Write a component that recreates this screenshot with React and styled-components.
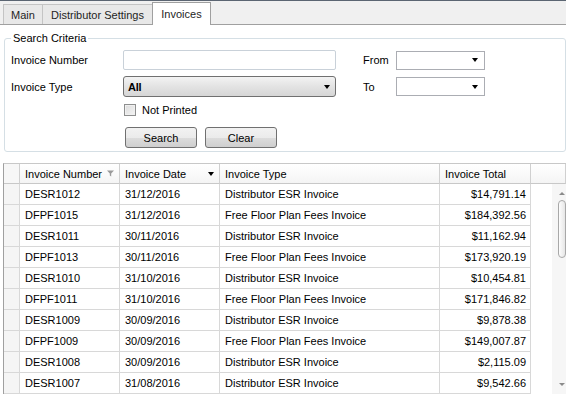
import React from "react"
import styled, { createGlobalStyle } from "styled-components"

const GlobalStyle = createGlobalStyle`
  body {
    margin: 0;
    background: #ffffff;
    font-family: "Liberation Sans", Arial, sans-serif;
    font-size: 11px;
    color: #000000;
  }
`

const rows = [
  ["DESR1012", "31/12/2016", "Distributor ESR Invoice", "$14,791.14"],
  ["DFPF1015", "31/12/2016", "Free Floor Plan Fees Invoice", "$184,392.56"],
  ["DESR1011", "30/11/2016", "Distributor ESR Invoice", "$11,162.94"],
  ["DFPF1013", "30/11/2016", "Free Floor Plan Fees Invoice", "$173,920.19"],
  ["DESR1010", "31/10/2016", "Distributor ESR Invoice", "$10,454.81"],
  ["DFPF1011", "31/10/2016", "Free Floor Plan Fees Invoice", "$171,846.82"],
  ["DESR1009", "30/09/2016", "Distributor ESR Invoice", "$9,878.38"],
  ["DFPF1009", "30/09/2016", "Free Floor Plan Fees Invoice", "$149,007.87"],
  ["DESR1008", "30/09/2016", "Distributor ESR Invoice", "$2,115.09"],
  ["DESR1007", "31/08/2016", "Distributor ESR Invoice", "$9,542.66"],
]

const COLS = "16px 100px 100px 220px 91px"

const Window = styled.div`
  width: 566px;
  height: 394px;
  overflow: hidden;
  border-top: 1px solid #5b6572;
  box-sizing: border-box;
  background: #ffffff;
`

const TabStrip = styled.div`
  display: flex;
  align-items: flex-end;
  height: 23px;
  padding-left: 3px;
  background: #f0f0f0;
  border-bottom: 1px solid #a0a0a0;
`

const Tab = styled.div`
  box-sizing: border-box;
  width: ${(p) => p.$w}px;
  height: ${(p) => (p.$active ? 23 : 20)}px;
  margin-bottom: ${(p) => (p.$active ? -1 : 0)}px;
  margin-right: -1px;
  padding-top: ${(p) => (p.$active ? 5 : 4)}px;
  text-align: center;
  color: #1e1e1e;
  background: ${(p) => (p.$active ? "#ffffff" : "#e8e8e8")};
  border: 1px solid ${(p) => (p.$active ? "#a0a0a0" : "#c4c4c4")};
  border-bottom: none;
  position: relative;
  z-index: ${(p) => (p.$active ? 1 : 0)};
`

const Content = styled.div`
  padding: 7px 0 0 0;
`

const GroupBox = styled.fieldset`
  margin: 0 0 0 4px;
  padding: 3px 0 0 6px;
  height: 120px;
  box-sizing: border-box;
  border: 1px solid #d5dfe5;
  border-radius: 3px;
`

const Legend = styled.legend`
  padding: 0 2px;
  margin-left: 0;
  color: #000000;
`

const Form = styled.div`
  display: grid;
  grid-template-columns: 112px 240px 33px 89px;
  grid-template-rows: 20px 21px 14px 25px;
  row-gap: 6px;
  align-items: center;
  margin-top: 3px;
`

const Label = styled.div`
  line-height: 14px;
`

const TextInput = styled.div`
  box-sizing: border-box;
  width: 213px;
  height: 20px;
  border: 1px solid #c9d1d9;
  border-radius: 2px;
  background: #ffffff;
`

const Select = styled.div`
  box-sizing: border-box;
  width: 213px;
  height: 21px;
  border: 1px solid #707070;
  border-radius: 3px;
  background: linear-gradient(#f3f3f3, #e3e3e3 50%, #d6d6d6);
  display: flex;
  align-items: center;
  justify-content: space-between;
  padding: 0 5px 0 4px;
  font-weight: bold;
  letter-spacing: -0.3px;
`

const DateBox = styled.div`
  box-sizing: border-box;
  width: 89px;
  height: 19px;
  border: 1px solid #abadb3;
  background: #ffffff;
  display: flex;
  align-items: center;
  justify-content: flex-end;
  padding-right: 6px;
`

const Arrow = styled.span`
  width: 0;
  height: 0;
  border-left: 3.5px solid transparent;
  border-right: 3.5px solid transparent;
  border-top: 4px solid #000000;
`

const CheckRow = styled.div`
  grid-column: 2;
  display: flex;
  align-items: center;
  gap: 6px;
  padding-left: 1px;
`

const CheckBox = styled.span`
  box-sizing: border-box;
  width: 12px;
  height: 12px;
  border: 1px solid #8e8f8f;
  background: linear-gradient(135deg, #dcdcdc, #f4f4f4);
  box-shadow: inset 0 0 0 1px #f0f0f0;
`

const ButtonRow = styled.div`
  grid-column: 2;
  align-self: end;
  display: flex;
  gap: 8px;
  padding-left: 2px;
`

const Button = styled.div`
  box-sizing: border-box;
  width: 72px;
  height: 21px;
  border: 1px solid #707070;
  border-radius: 3px;
  background: linear-gradient(#f2f2f2, #ebebeb 50%, #dddddd 51%, #cfcfcf);
  display: flex;
  align-items: center;
  justify-content: center;
`

const Grid = styled.div`
  margin: 11px 0 0 3px;
  border-left: 1px solid #a0a0a0;
  border-top: 1px solid #c8c8c8;
  display: flex;
  flex-direction: column;
`

const HeaderRow = styled.div`
  display: grid;
  grid-template-columns: ${COLS} 1fr;
  height: 20px;
  background: linear-gradient(#ffffff, #f4f4f4);
`

const HeaderCell = styled.div`
  box-sizing: border-box;
  border-right: 1px solid #d0d0d0;
  border-bottom: 1px solid #c8c8c8;
  padding: 0 5px;
  display: flex;
  align-items: center;
  justify-content: space-between;
  background: ${(p) => (p.$blank ? "#f7f7f7" : "transparent")};
`

const Body = styled.div`
  display: flex;
`

const RowList = styled.div`
  flex: 1;
`

const Row = styled.div`
  display: grid;
  grid-template-columns: ${COLS};
  height: 21px;
`

const Cell = styled.div`
  box-sizing: border-box;
  border-right: 1px solid #d8d8d8;
  border-bottom: 1px solid #d8d8d8;
  padding: 0 5px;
  display: flex;
  align-items: center;
  justify-content: ${(p) => (p.$right ? "flex-end" : "flex-start")};
  padding-right: ${(p) => (p.$right ? 4 : 5)}px;
  background: ${(p) => (p.$indicator ? "#f5f5f5" : "#ffffff")};
  white-space: nowrap;
`

const ScrollBar = styled.div`
  width: 14px;
  background: #f6f6f6;
  display: flex;
  flex-direction: column;
  align-items: flex-start;
  padding: 8px 0 0 6px;
  box-sizing: border-box;
`

const ScrollArrow = styled.span`
  width: 0;
  height: 0;
  margin-left: 1px;
  border-left: 3px solid transparent;
  border-right: 3px solid transparent;
  ${(p) =>
    p.$down
      ? "border-top: 3px solid #8a8a8a; margin-top: auto; margin-bottom: 8px;"
      : "border-bottom: 3px solid #8a8a8a;"}
`

const Thumb = styled.div`
  box-sizing: border-box;
  margin-top: 5px;
  width: 8px;
  height: 58px;
  border: 1px solid #a8a8a8;
  border-radius: 4px;
  background: linear-gradient(90deg, #fdfdfd, #e6e6e6);
`

function FilterIcon() {
  return (
    <svg width="7" height="7" viewBox="0 0 7 7">
      <path d="M0 0.5h7L4.2 3.5v3l-1.4-1v-2z" fill="#9a9a9a" />
    </svg>
  )
}

function App() {
  return (
    <Window>
      <GlobalStyle />
      <TabStrip>
        <Tab $w={40}>Main</Tab>
        <Tab $w={111}>Distributor Settings</Tab>
        <Tab $w={59} $active>
          Invoices
        </Tab>
      </TabStrip>

      <Content>
        <GroupBox>
          <Legend>Search Criteria</Legend>
          <Form>
            <Label>Invoice Number</Label>
            <TextInput />
            <Label>From</Label>
            <DateBox>
              <Arrow />
            </DateBox>

            <Label>Invoice Type</Label>
            <Select>
              <span>All</span>
              <Arrow />
            </Select>
            <Label>To</Label>
            <DateBox>
              <Arrow />
            </DateBox>

            <CheckRow>
              <CheckBox />
              <span>Not Printed</span>
            </CheckRow>

            <ButtonRow>
              <Button>Search</Button>
              <Button>Clear</Button>
            </ButtonRow>
          </Form>
        </GroupBox>

        <Grid>
          <HeaderRow>
            <HeaderCell $blank />
            <HeaderCell>
              Invoice Number
              <FilterIcon />
            </HeaderCell>
            <HeaderCell>
              Invoice Date
              <Arrow />
            </HeaderCell>
            <HeaderCell>Invoice Type</HeaderCell>
            <HeaderCell>Invoice Total</HeaderCell>
            <HeaderCell />
          </HeaderRow>
          <Body>
            <RowList>
              {rows.map((r) => (
                <Row key={r[0]}>
                  <Cell $indicator />
                  <Cell>{r[0]}</Cell>
                  <Cell>{r[1]}</Cell>
                  <Cell>{r[2]}</Cell>
                  <Cell $right>{r[3]}</Cell>
                </Row>
              ))}
            </RowList>
            <ScrollBar>
              <ScrollArrow />
              <Thumb />
              <ScrollArrow $down />
            </ScrollBar>
          </Body>
        </Grid>
      </Content>
    </Window>
  )
}

export default App
